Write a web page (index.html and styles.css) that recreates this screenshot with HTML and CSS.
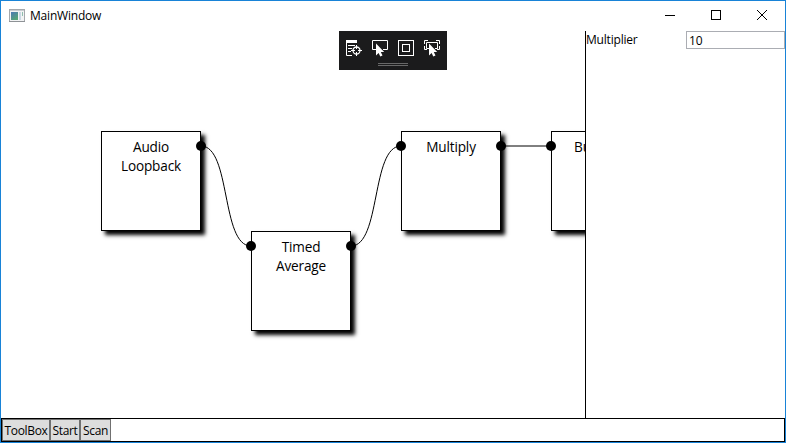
FILE: index.html
```
<!DOCTYPE html>
<html lang="en">
<head>
<meta charset="utf-8">
<title>MainWindow</title>
<link rel="stylesheet" href="styles.css">
</head>
<body>
<div class="window">
  <header class="titlebar">
    <svg class="app-icon" width="16" height="14" viewBox="0 0 16 14">
      <defs><linearGradient id="pane" x1="0" y1="0" x2="0.6" y2="1"><stop offset="0" stop-color="#4b78b5"/><stop offset="1" stop-color="#55a576"/></linearGradient></defs>
      <rect x="0.5" y="0.5" width="15" height="12" fill="#f2f3f4" stroke="#a4a8ac"/>
      <rect x="1" y="1" width="14" height="1" fill="#c8ccd0"/>
      <rect x="2" y="3" width="7" height="8" fill="url(#pane)"/>
      <rect x="10" y="3" width="2" height="8" fill="#c9d8e4"/>
      <rect x="13" y="3" width="1" height="4" fill="#8fbdae"/>
      <rect x="0" y="12" width="16" height="1" fill="#8e9296"/>
    </svg>
    <span class="title">MainWindow</span>
    <div class="controls">
      <svg width="12" height="12" viewBox="0 0 12 12"><path d="M1 6.5h10"/></svg>
      <svg width="12" height="12" viewBox="0 0 12 12"><rect x="1.5" y="1.5" width="9" height="9"/></svg>
      <svg width="12" height="12" viewBox="0 0 12 12"><path d="M1 1l10 10M11 1L1 11"/></svg>
    </div>
  </header>
  <main class="content">
    <section class="canvas">
      <svg class="wires" width="584" height="387" viewBox="1 31 584 387">
        <path d="M201 146C231 146 221 246 251 246"/>
        <path d="M351 246C381 246 371 146 401 146"/>
        <path d="M501 146H551"/>
      </svg>
      <div class="node audio">Audio<br>Loopback<i class="port out"></i></div>
      <div class="node timed">Timed<br>Average<i class="port in"></i><i class="port out"></i></div>
      <div class="node multiply">Multiply<i class="port in"></i><i class="port out"></i></div>
      <div class="node buffer">Bu<i class="port in"></i></div>
    </section>
    <aside class="properties">
      <label for="multiplier">Multiplier</label>
      <input id="multiplier" type="text" value="10">
    </aside>
  </main>
  <footer class="actions">
    <button class="toolbox">ToolBox</button><button class="start">Start</button><button class="scan">Scan</button>
  </footer>
  <div class="debugbar">
    <svg width="108" height="39" viewBox="0 0 108 39">
      <g fill="none" stroke="#fff">
        <path d="M7.5 10v14.5H13M9 14.5h7M9 17.5h4M9 20.5h3"/>
        <path d="M7 10.500h11" stroke-width="3"/>
        <circle cx="17.500" cy="19.500" r="3.500" stroke-width="1.300"/>
        <path d="M17.500 14v4M17.500 21v4M12 19.500h4M19 19.500h4"/>
        <path d="M37 18.500H33.500v-9h15v9H44"/>
        <rect x="59.500" y="9.500" width="15" height="15"/>
        <rect x="63.500" y="13.500" width="7" height="7"/>
        <path d="M85.500 13V9.500H89M97 9.500h3.500V13M85.500 15v3.500H88M100.500 15v3.500H98M90 17.500H87.500v-6h11v6H96"/>
      </g>
      <path fill="#fff" d="M37 12.500v12l2.600-2.600 1.700 3.600 2.200-1-1.700-3.500h3.400z"/>
      <path fill="#fff" d="M90 12.500v12l2.600-2.600 1.700 3.600 2.200-1-1.700-3.500h3.400z"/>
      <path fill="#686868" d="M39 32h30v1H39zM39 34h30v1H39z"/>
    </svg>
  </div>
</div>
</body>
</html>
```
FILE: styles.css
```
* { box-sizing: border-box; }
body { margin: 0; background: #fff; color: #000; font: 12px/16px "Open Sans", "Noto Sans", sans-serif; overflow: hidden; }
.window { position: relative; width: 786px; height: 443px; border: 1px solid #1883d7; display: flex; flex-direction: column; background: #fff; }
.titlebar { height: 30px; display: flex; align-items: center; padding: 0 17px 0 8px; flex: none; }
.app-icon { margin-right: 5px; margin-top: -1px; }
.title { font-size: 12px; letter-spacing: -.2px; }
.controls { margin-left: auto; display: flex; gap: 34px; }
.controls svg { display: block; fill: none; stroke: #000; stroke-width: 1; margin-top: -2px; }
.content { flex: 1; display: flex; min-height: 0; }
.canvas { position: relative; width: 584px; overflow: hidden; }
.wires { display: block; fill: none; stroke: #000; }
.node { position: absolute; width: 100px; height: 100px; border: 1px solid #000; background: #fff; box-shadow: 3.5px 3.5px 4px 0 #000; text-align: center; padding-top: 5px; font-size: 13.6px; line-height: 19px; letter-spacing: -.15px; }
.audio { left: 100px; top: 100px; }
.timed { left: 250px; top: 200px; }
.multiply { left: 400px; top: 100px; }
.buffer { left: 550px; top: 100px; text-align: left; padding-left: 22px; }
.port { position: absolute; top: 9px; width: 10px; height: 10px; border-radius: 50%; background: #000; }
.in { left: -6px; }
.out { right: -6px; }
.properties { flex: 1; border-left: 1px solid #000; display: flex; align-items: flex-start; }
.properties label { width: 100px; line-height: 18px; letter-spacing: -.2px; }
.properties input { width: 99px; height: 18px; border: 1px solid #abadb3; padding: 0 2px; font: inherit; color: #000; background: #fff; outline: 0; }
.actions { height: 24px; border: 1px solid #000; display: flex; flex: none; }
.actions button { height: 22px; border: 1px solid #707070; background: #ddd; padding: 2px 0 0; margin: 0; font: inherit; color: #000; letter-spacing: -.35px; white-space: nowrap; border-radius: 0; }
.toolbox { width: 48px; }
.start { width: 30px; }
.scan { width: 31px; }
.debugbar { position: absolute; left: 338px; top: 30px; width: 108px; height: 39px; background: #1b1b1c; }
.debugbar svg { display: block; }
```
